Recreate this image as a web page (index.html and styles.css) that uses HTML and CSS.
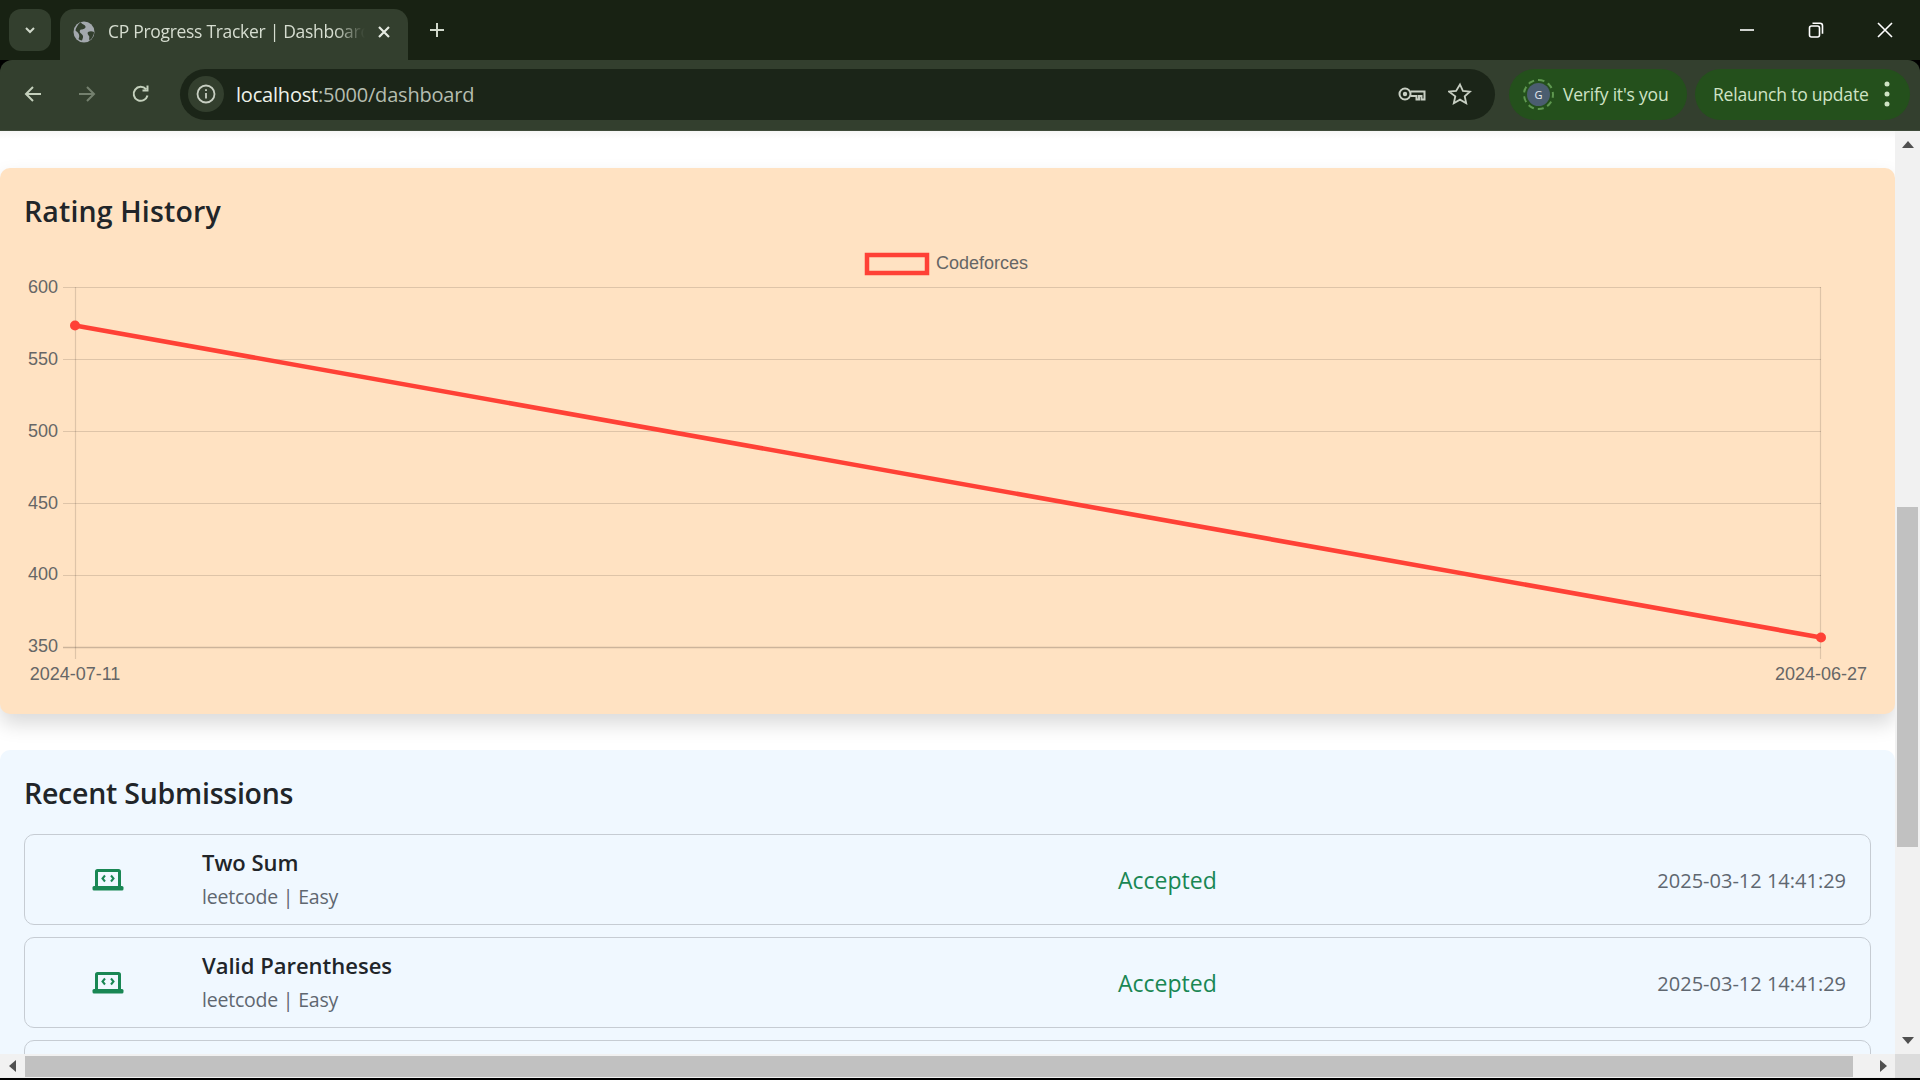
FILE: index.html
```html
<!DOCTYPE html>
<html lang="en">
<head>
    <meta charset="UTF-8">
    <title>CP Progress Tracker | Dashboard</title>
    <link rel="stylesheet" href="styles.css">
</head>
<body>

<div class="tabstrip">
    <button class="tab-search">
        <svg width="16" height="16" viewBox="0 0 16 16"><path class="glyph-line" d="M4 6l4 4 4-4"/></svg>
    </button>
    <div class="tab">
        <svg class="favicon" width="22" height="22" viewBox="0 0 22 22">
            <circle cx="11" cy="11" r="10.5" fill="#a3a8ad"/>
            <path d="M8 1.500c1 2 4 2 4.500 4s-2.500 3-4 3-2.500 2-1 3.500 3 2 2.500 4.500l-1 3c-1 .200-3-1-3.500-1.500 1-2 1-4 0-5.500s-2-2-3-3c.500-3 3-7 5.500-8.500zM15 11c2-1 4-1 6 0 0 3-2 7-4.500 8.500-1-2 .500-3.500-.500-4.500s-2-3-1-4z" fill="#333f2e"/>
        </svg>
        <span class="tab-title">CP Progress Tracker | Dashboard</span>
        <svg class="tab-close" width="14" height="14" viewBox="0 0 14 14"><path class="glyph-line bright" d="M2 2l10 10M12 2L2 12"/></svg>
    </div>
    <svg class="new-tab" width="18" height="18" viewBox="0 0 18 18"><path class="glyph-line" d="M9 2v14M2 9h14"/></svg>
    <div class="window-controls">
        <svg width="16" height="16" viewBox="0 0 16 16"><path class="glyph-thin" d="M1 8h14"/></svg>
        <svg width="16" height="16" viewBox="0 0 16 16"><rect class="glyph-thin" x="1.500" y="4" width="10" height="11" rx="2"/><path class="glyph-thin" d="M4.500 1.200h7.500a2.500 2.500 0 0 1 2.500 2.500v8"/></svg>
        <svg width="16" height="16" viewBox="0 0 16 16"><path class="glyph-thin" d="M1 1l14 14M15 1L1 15"/></svg>
    </div>
</div>

<div class="toolbar">
    <svg class="nav-icon" width="20" height="20" viewBox="0 0 20 20"><path class="glyph-nav" d="M18 10H3M10 3l-7 7 7 7"/></svg>
    <svg class="nav-icon dim" width="20" height="20" viewBox="0 0 20 20"><path class="glyph-nav" d="M2 10h15M10 3l7 7-7 7"/></svg>
    <svg class="nav-icon" width="20" height="20" viewBox="0 0 20 20"><path class="glyph-nav" d="M16.500 11.500A7 7 0 1 1 15 5.200M16.500 1.500v5h-5"/></svg>
    <div class="omnibox">
        <span class="site-info">
            <svg width="20" height="20" viewBox="0 0 20 20"><circle class="glyph-info" cx="10" cy="10" r="8.500"/><path class="glyph-info" d="M10 9v5.500M10 5.200v1.800"/></svg>
        </span>
        <span class="url"><span class="url-host">localhost</span>:5000/dashboard</span>
        <svg class="omni-key" width="28" height="18" viewBox="0 0 28 18"><circle class="glyph-key" cx="7" cy="9" r="5.500"/><circle cx="7" cy="9" r="2.200" fill="#c8cfc3"/><path class="glyph-key" d="M12.500 6.500H26.500v8H23.500v-3.500h-2.500v3.500H18.500v-3.500h-6"/></svg>
        <svg class="omni-star" width="24" height="24" viewBox="0 0 24 24"><path class="glyph-info" d="M12 2.500l2.900 6.400 7 .7-5.200 4.700 1.500 6.900-6.200-3.600-6.200 3.600 1.500-6.900L1.100 9.600l7-.7z"/></svg>
    </div>
    <div class="chip chip-verify">
        <span class="avatar">G</span>
        <span>Verify it's you</span>
    </div>
    <div class="chip chip-relaunch">
        <span>Relaunch to update</span>
        <svg width="6" height="26" viewBox="0 0 6 26"><circle cx="3" cy="3" r="2.500"/><circle cx="3" cy="13" r="2.500"/><circle cx="3" cy="23" r="2.500"/></svg>
    </div>
</div>

<div class="viewport">
    <div class="viewport-main">
        <main class="page">
            <section class="card card-rating">
                <h4 class="card-title">Rating History</h4>
                <svg class="chart" width="1895" height="474" viewBox="0 240 1895 474">
                    <rect class="legend-box" x="867" y="255" width="60" height="18"/>
                    <text class="chart-label" x="936" y="269">Codeforces</text>

                    <path class="grid" d="M63 287.500H1821M63 359.500H1821M63 431.500H1821M63 503.500H1821M63 575.500H1821"/>
                    <path class="grid-axis" d="M63 647.500H1821"/>
                    <path class="grid" d="M75.500 287V659M1820.500 287V659"/>

                    <text class="chart-label end" x="58" y="293">600</text>
                    <text class="chart-label end" x="58" y="365">550</text>
                    <text class="chart-label end" x="58" y="437">500</text>
                    <text class="chart-label end" x="58" y="509">450</text>
                    <text class="chart-label end" x="58" y="580">400</text>
                    <text class="chart-label end" x="58" y="652">350</text>
                    <text class="chart-label mid" x="75" y="680">2024-07-11</text>
                    <text class="chart-label mid" x="1821" y="680">2024-06-27</text>

                    <path class="rating-line" d="M75 325.500L1821 637.500"/>
                    <circle class="rating-point" cx="75" cy="325.500" r="5"/>
                    <circle class="rating-point" cx="1821" cy="637.500" r="5"/>
                </svg>
            </section>

            <section class="card card-submissions">
                <h4 class="card-title">Recent Submissions</h4>
                <div class="submission-list">
                    <div class="submission">
                        <svg class="laptop" width="32" height="22" viewBox="0 0 32 22"><path class="laptop-screen" d="M4.500 17V2.500a1 1 0 0 1 1-1h21a1 1 0 0 1 1 1V17"/><path class="laptop-code" d="M13 6.500L10.500 9.500 13 12.500M19 6.500l2.500 3-2.500 3"/><rect class="laptop-base" x="0.500" y="17" width="31" height="4.500" rx="1.500"/></svg>
                        <div>
                            <div class="problem-name">Two Sum</div>
                            <div class="problem-meta">leetcode | Easy</div>
                        </div>
                        <div class="status">Accepted</div>
                        <div class="timestamp">2025-03-12 14:41:29</div>
                    </div>
                    <div class="submission">
                        <svg class="laptop" width="32" height="22" viewBox="0 0 32 22"><path class="laptop-screen" d="M4.500 17V2.500a1 1 0 0 1 1-1h21a1 1 0 0 1 1 1V17"/><path class="laptop-code" d="M13 6.500L10.500 9.500 13 12.500M19 6.500l2.500 3-2.500 3"/><rect class="laptop-base" x="0.500" y="17" width="31" height="4.500" rx="1.500"/></svg>
                        <div>
                            <div class="problem-name">Valid Parentheses</div>
                            <div class="problem-meta">leetcode | Easy</div>
                        </div>
                        <div class="status">Accepted</div>
                        <div class="timestamp">2025-03-12 14:41:29</div>
                    </div>
                    <div class="submission"></div>
                </div>
            </section>
        </main>
        <div class="scrollbar-v">
            <span class="arrow arrow-up"></span>
            <div class="thumb-track-v"><div class="thumb-v"></div></div>
            <span class="arrow arrow-down"></span>
        </div>
    </div>
    <div class="scrollbar-h">
        <span class="arrow-cell"><span class="arrow arrow-left"></span></span>
        <div class="thumb-h"></div>
        <span class="arrow-cell arrow-cell-end"><span class="arrow arrow-right"></span></span>
        <span class="scroll-corner"></span>
    </div>
</div>

</body>
</html>
```

FILE: styles.css
```css
html, body {
    margin: 0;
    height: 100%;
    overflow: hidden;
}
body {
    width: 1920px;
    height: 1080px;
    display: flex;
    flex-direction: column;
    background: #000;
    font-family: "Open Sans", "Noto Sans", sans-serif;
}

/* browser chrome */
.tabstrip {
    height: 60px;
    flex: none;
    display: flex;
    align-items: flex-end;
    background: #182213;
    position: relative;
}
.tab-search {
    width: 42px;
    height: 42px;
    margin: 0 9px 9px 9px;
    padding: 0;
    border: none;
    border-radius: 12px;
    background: #333f2e;
    display: flex;
    justify-content: center;
    align-items: center;
}
.tab {
    width: 348px;
    height: 51px;
    border-radius: 14px 14px 0 0;
    background: #333f2e;
    display: flex;
    align-items: center;
    padding: 0 17px 6px 13px;
    box-sizing: border-box;
    color: #d6ddd0;
}
.favicon {
    flex: none;
}
.tab-title {
    flex: 1;
    margin-left: 13px;
    margin-top: -2px;
    font-size: 17.5px;
    letter-spacing: -0.3px;
    white-space: nowrap;
    overflow: hidden;
    -webkit-mask-image: linear-gradient(90deg, #000 88%, transparent 100%);
    mask-image: linear-gradient(90deg, #000 88%, transparent 100%);
}
.tab-close {
    flex: none;
    margin-left: 12px;
}
.new-tab {
    margin: 0 0 21px 20px;
}
.window-controls {
    margin-left: auto;
    align-self: center;
    display: flex;
    gap: 53px;
    padding-right: 27px;
    margin-top: -1px;
}
.glyph-line {
    fill: none;
    stroke: #d0d8cb;
    stroke-width: 2;
}
.glyph-line.bright {
    stroke: #e6ebe2;
    stroke-width: 2.2;
}
.glyph-thin {
    fill: none;
    stroke: #fff;
    stroke-width: 1.6;
}

.toolbar {
    height: 71px;
    flex: none;
    box-sizing: border-box;
    display: flex;
    align-items: center;
    background: #333f2e;
    border-radius: 12px 12px 0 0;
    border-bottom: 1px solid #3e4a39;
    padding: 0 10px 2px 23px;
}
.nav-icon {
    flex: none;
    margin-right: 34px;
}
.nav-icon.dim {
    opacity: 0.45;
}
.nav-icon:nth-of-type(3) {
    margin-right: 29px;
}
.glyph-nav {
    fill: none;
    stroke: #c4d0bc;
    stroke-width: 2;
}
.omnibox {
    width: 1315px;
    height: 51px;
    flex: none;
    box-sizing: border-box;
    border-radius: 26px;
    background: #1b2518;
    display: flex;
    align-items: center;
    padding: 0 23px 0 8px;
}
.site-info {
    width: 36px;
    height: 36px;
    border-radius: 50%;
    background: #333f2e;
    display: flex;
    justify-content: center;
    align-items: center;
}
.glyph-info {
    fill: none;
    stroke: #c8cfc3;
    stroke-width: 1.8;
}
.glyph-key {
    fill: none;
    stroke: #c8cfc3;
    stroke-width: 2;
}
.url {
    margin-left: 12px;
    font-size: 20px;
    letter-spacing: -0.2px;
    color: #b5bdb0;
}
.url-host {
    color: #eef2ea;
}
.omni-key {
    margin-left: auto;
}
.omni-star {
    margin-left: 22px;
}
.chip {
    height: 51px;
    box-sizing: border-box;
    border-radius: 26px;
    background: #24501c;
    display: flex;
    align-items: center;
    color: #cfe3c5;
    font-size: 17.5px;
    letter-spacing: -0.2px;
    white-space: nowrap;
}
.chip-verify {
    width: 178px;
    margin-left: 14px;
    padding-left: 18px;
    gap: 13px;
}
.chip-relaunch {
    width: 215px;
    margin-left: 8px;
    padding-left: 18px;
    gap: 15px;
}
.chip-relaunch circle {
    fill: #cfe3c5;
}
.avatar {
    width: 23px;
    height: 23px;
    border-radius: 50%;
    background: #4b5d70;
    color: #e6edf2;
    font-size: 11px;
    letter-spacing: 0;
    display: flex;
    justify-content: center;
    align-items: center;
    outline: 2px dashed #5f9850;
    outline-offset: 2px;
}

/* page */
.viewport {
    height: 947px;
    flex: none;
    display: flex;
    flex-direction: column;
    background: #fff;
}
.viewport-main {
    height: 923px;
    flex: none;
    display: flex;
}
.page {
    width: 1895px;
    flex: none;
    overflow: hidden;
    padding-top: 37px;
    box-sizing: border-box;
    background: linear-gradient(#f6f6f6, #fff 8px);
}
.card {
    border-radius: 10px;
}
.card-rating {
    height: 546px;
    box-sizing: border-box;
    padding-top: 25px;
    background: #ffe2c2;
    box-shadow: 0 10px 20px rgba(0, 0, 0, 0.15);
}
.card-submissions {
    margin-top: 36px;
    padding: 25px 24px 0 24px;
    background: #f0f8ff;
}
.card-title {
    margin: 0 0 11px 24px;
    font-size: 28.5px;
    line-height: 36px;
    font-weight: 600;
    letter-spacing: 0.15px;
    color: #212529;
}
.card-submissions .card-title {
    margin: 0 0 23px 0;
    letter-spacing: -0.25px;
}
.chart {
    display: block;
}
.chart-label {
    font-family: "Liberation Sans", Arial, sans-serif;
    font-size: 18px;
    fill: #666;
}
.chart-label.end {
    text-anchor: end;
}
.chart-label.mid {
    text-anchor: middle;
}
.legend-box {
    fill: none;
    stroke: #ff4136;
    stroke-width: 4.5;
}
.grid {
    fill: none;
    stroke: rgba(0, 0, 0, 0.13);
    stroke-width: 1.2;
}
.grid-axis {
    fill: none;
    stroke: rgba(0, 0, 0, 0.2);
    stroke-width: 1.4;
}
.rating-line {
    fill: none;
    stroke: #ff4136;
    stroke-width: 4.6;
}
.rating-point {
    fill: #ff4136;
}
.submission-list {
    display: flex;
    flex-direction: column;
    gap: 12px;
}
.submission {
    height: 91px;
    flex: none;
    box-sizing: border-box;
    border: 1.25px solid #c6ccd3;
    border-radius: 10px;
    display: grid;
    grid-template-columns: 177px 916px 1fr auto;
    align-items: center;
    padding-right: 24px;
}
.laptop {
    justify-self: center;
    margin-right: 12px;
}
.laptop-screen {
    fill: none;
    stroke: #198754;
    stroke-width: 3;
}
.laptop-code {
    fill: none;
    stroke: #198754;
    stroke-width: 2;
}
.laptop-base {
    fill: #198754;
}
.problem-name {
    font-size: 22px;
    line-height: 30px;
    font-weight: 600;
    margin-top: -1px;
    color: #212529;
}
.problem-meta {
    margin-top: 5px;
    font-size: 19.5px;
    line-height: 30px;
    letter-spacing: -0.22px;
    color: #5f6770;
}
.status {
    font-size: 23px;
    color: #198754;
}
.timestamp {
    margin-top: 2px;
    font-size: 20px;
    color: #5f6770;
}

/* scrollbars */
.scrollbar-v {
    width: 25px;
    flex: none;
    background: #f1f1f1;
    display: flex;
    flex-direction: column;
    align-items: center;
    box-sizing: border-box;
    padding: 10px 0;
}
.thumb-track-v {
    flex: 1;
    width: 21px;
}
.thumb-v {
    height: 340px;
    margin-top: 359px;
    background: #c1c1c1;
}
.arrow {
    width: 0;
    height: 0;
    display: block;
    border: 6px solid transparent;
}
.arrow-up {
    border-top: none;
    border-bottom: 7px solid #505050;
}
.arrow-down {
    border-bottom: none;
    border-top: 7px solid #505050;
}
.arrow-left {
    border-left: none;
    border-right: 7px solid #505050;
}
.arrow-right {
    border-right: none;
    border-left: 7px solid #505050;
}
.scrollbar-h {
    height: 24px;
    flex: none;
    display: flex;
    background: #f1f1f1;
    align-items: center;
}
.arrow-cell {
    width: 25px;
    height: 24px;
    flex: none;
    display: flex;
    justify-content: center;
    align-items: center;
}
.arrow-cell-end {
    width: 42px;
    box-sizing: border-box;
    justify-content: flex-end;
    padding-right: 8px;
}
.thumb-h {
    width: 1828px;
    height: 21px;
    background: #c1c1c1;
}
.scroll-corner {
    width: 25px;
    height: 24px;
    flex: none;
    background: #dcdcdc;
}
```
